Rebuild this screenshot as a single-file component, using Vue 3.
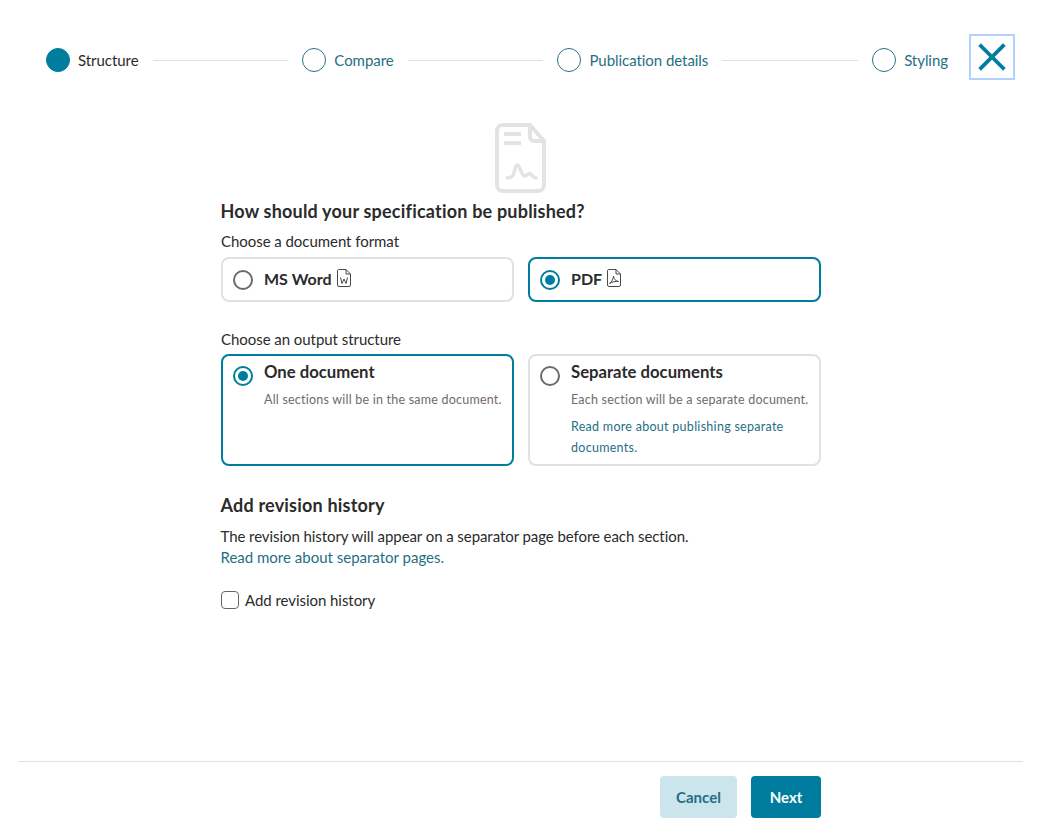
<script setup>
const steps = [
  { label: 'Structure', active: true },
  { label: 'Compare' },
  { label: 'Publication details' },
  { label: 'Styling' }
]
</script>

<template>
  <div class="page">
    <header class="top">
      <ol class="stepper">
        <template v-for="(s, i) in steps" :key="s.label">
          <li class="step" :class="{ active: s.active }">
            <span class="dot"></span>
            <span class="step-label">{{ s.label }}</span>
          </li>
          <li v-if="i < steps.length - 1" class="connector"></li>
        </template>
      </ol>
      <button class="close" aria-label="Close">
        <svg width="28" height="28" viewBox="0 0 28 28"><path d="M3 3 L25 25 M25 3 L3 25" stroke="#007c9e" stroke-width="3.800" fill="none" stroke-linecap="square"/></svg>
      </button>
    </header>

    <main class="content">
      <div class="hero">
        <svg width="54" height="70" viewBox="0 0 54 70" fill="none" stroke="#e3e3e3" stroke-width="4" stroke-linecap="round" stroke-linejoin="round">
          <path d="M9 2 H36 L50 18 V62 A6 6 0 0 1 44 68 H9 A6 6 0 0 1 3 62 V8 A6 6 0 0 1 9 2 Z"/>
          <path d="M36 2 V14 A4 4 0 0 0 40 18 H50"/>
          <path d="M10 11 H27 M10 20 H27" stroke-linecap="butt"/>
          <path d="M13 54.700 C17 54.700 19 54 20 50 C21 45 22 42 23.500 42 C26 42 27 53 31 53 C33 53 33.500 50.500 35.500 50.500 C37.500 50.500 38 54.700 42 54.700" stroke-width="3.500"/>
        </svg>
      </div>

      <h2 class="title">How should your specification be published?</h2>
      <p class="label">Choose a document format</p>
      <div class="cards">
        <label class="card short">
          <span class="radio"></span>
          <span class="card-title">MS Word</span>
          <svg class="file" width="14" height="18" viewBox="0 0 14 18" fill="none" stroke="#4a4a4a" stroke-width="1"><path d="M1.500 .5 H9 L13.500 5 V16 A1.500 1.500 0 0 1 12 17.500 H2 A1.500 1.500 0 0 1 .5 16 V2 A1.500 1.500 0 0 1 1.500 .5 Z M9 .5 V5 H13.500"/><path d="M3.500 8.500 L5 14.500 L7 10 L9 14.500 L10.500 8.500"/></svg>
        </label>
        <label class="card short on">
          <span class="radio"><i></i></span>
          <span class="card-title">PDF</span>
          <svg class="file" width="14" height="18" viewBox="0 0 14 18" fill="none" stroke="#4a4a4a" stroke-width="1"><path d="M1.500 .5 H9 L13.500 5 V16 A1.500 1.500 0 0 1 12 17.500 H2 A1.500 1.500 0 0 1 .5 16 V2 A1.500 1.500 0 0 1 1.500 .5 Z M9 .5 V5 H13.500"/><path d="M2.500 14.500 C5 13 6.500 9 6.500 7 C6.500 9 8 12 11.500 12.500 C8.500 12 5 13 2.500 14.500 Z"/></svg>
        </label>
      </div>

      <p class="label second">Choose an output structure</p>
      <div class="cards">
        <label class="card tall on">
          <span class="radio"><i></i></span>
          <div class="card-body">
            <div class="card-title">One document</div>
            <p class="hint">All sections will be in the same document.</p>
          </div>
        </label>
        <label class="card tall">
          <span class="radio"></span>
          <div class="card-body">
            <div class="card-title">Separate documents</div>
            <p class="hint">Each section will be a separate document.</p>
            <p class="hint"><a>Read more about publishing separate documents.</a></p>
          </div>
        </label>
      </div>

      <h2 class="title revision">Add revision history</h2>
      <p class="body-text">The revision history will appear on a separator page before each section.<br><a>Read more about separator pages.</a></p>
      <label class="check"><span class="box"></span>Add revision history</label>
    </main>

    <footer class="footer">
      <div class="actions">
        <button class="btn cancel">Cancel</button>
        <button class="btn next">Next</button>
      </div>
    </footer>
  </div>
</template>

<style>
html, body { margin: 0; background: #fff; }
</style>

<style scoped>
.page {
  height: 837px;
  display: flex;
  flex-direction: column;
  font-family: "Lato", "Liberation Sans", sans-serif;
  color: #2b2b2b;
  box-sizing: border-box;
  overflow: hidden;
}
.top {
  display: flex;
  align-items: flex-start;
  padding: 34px 32px 0 46px;
}
.stepper {
  flex: 1;
  display: flex;
  align-items: center;
  list-style: none;
  margin: 14px 0 0;
  padding: 0;
}
.step { display: flex; align-items: center; gap: 8px; color: #1f6f85; font-size: 15px; letter-spacing: -.05px; }
.step.active { color: #2b2b2b; }
.dot {
  width: 24px; height: 24px; border-radius: 50%;
  border: 1px solid #2a7186; box-sizing: border-box;
}
.active .dot { background: #007c9e; border-color: #007c9e; }
.connector { flex: 1; height: 1px; background: #e0e0e0; margin: 0 14px; }
.close {
  width: 46px; height: 46px; margin-left: 21px; padding: 0;
  border: 2px solid #b4d0fb; background: #fff; box-sizing: border-box;
  display: flex; align-items: center; justify-content: center;
}
.content { width: 600px; margin: 43px 0 0 221px; }
.hero { display: flex; justify-content: center; margin-left: -1px; height: 70px; }
.title { font-size: 18px; font-weight: 700; line-height: 24px; margin: 6px 0 0 -.5px; color: #2b2b2b; letter-spacing: .2px; }
.label { font-size: 15px; line-height: 20px; margin: 8px 0 6px; letter-spacing: -.05px; }
.label.second { margin-top: 27px; margin-bottom: 5px; }
.cards { display: grid; grid-template-columns: 293px 293px; gap: 14px; }
.card {
  display: flex; box-sizing: border-box;
  border: 2px solid #dfe2e2; border-radius: 8px; background: #fff;
}
.card.on { border-color: #007c9e; }
.short { height: 45px; align-items: center; padding: 0 10px; }
.tall { height: 112px; padding: 5px 10px; align-items: flex-start; }
.radio {
  width: 20px; height: 20px; border-radius: 50%; flex: none; box-sizing: border-box;
  border: 2px solid #6b6b6b; display: flex; align-items: center; justify-content: center;
}
.tall .radio { margin-top: 5px; }
.on .radio { border: 2.500px solid #007c9e; }
.radio i { width: 10px; height: 10px; border-radius: 50%; background: #007c9e; }
.card-title { font-size: 16px; font-weight: 700; margin-left: 11px; color: #2b2b2b; line-height: 22px; }
.short .card-title { margin-top: -2px; }
.tall .card-title { font-size: 16.700px; }
.card-body { min-width: 0; }
.file { margin-left: 5px; margin-top: -4px; }
.hint { font-size: 12.500px; line-height: 21px; margin: 6px 0 0 11px; color: #6f6a70; letter-spacing: .22px; }
.hint a { color: #1f6f85; letter-spacing: .28px; }
.body-text a { color: #1f6f85; letter-spacing: 0; }
.title.revision { margin-top: 27px; }
.body-text { font-size: 15px; line-height: 21px; margin: 9px 0 0 -.5px; letter-spacing: -.07px; }
.check { display: flex; align-items: center; font-size: 15px; margin-top: 22px; line-height: 20px; letter-spacing: -.05px; }
.box {
  width: 18px; height: 18px; border: 1px solid #666; border-radius: 4px;
  box-sizing: border-box; margin-right: 6px;
}
.footer { margin: auto 24px 0 18px; border-top: 1px solid #e0e0e0; padding: 14px 0 19px; }
.actions { display: flex; justify-content: flex-end; gap: 14px; margin-right: 202px; }
.btn {
  height: 42px; border: 0; border-radius: 4px; font-family: inherit;
  font-size: 15px; font-weight: 700; padding: 0;
}
.cancel { width: 77px; background: #cce4ec; color: #1f6f85; }
.next { width: 70px; background: #007c9e; color: #fff; }
</style>
